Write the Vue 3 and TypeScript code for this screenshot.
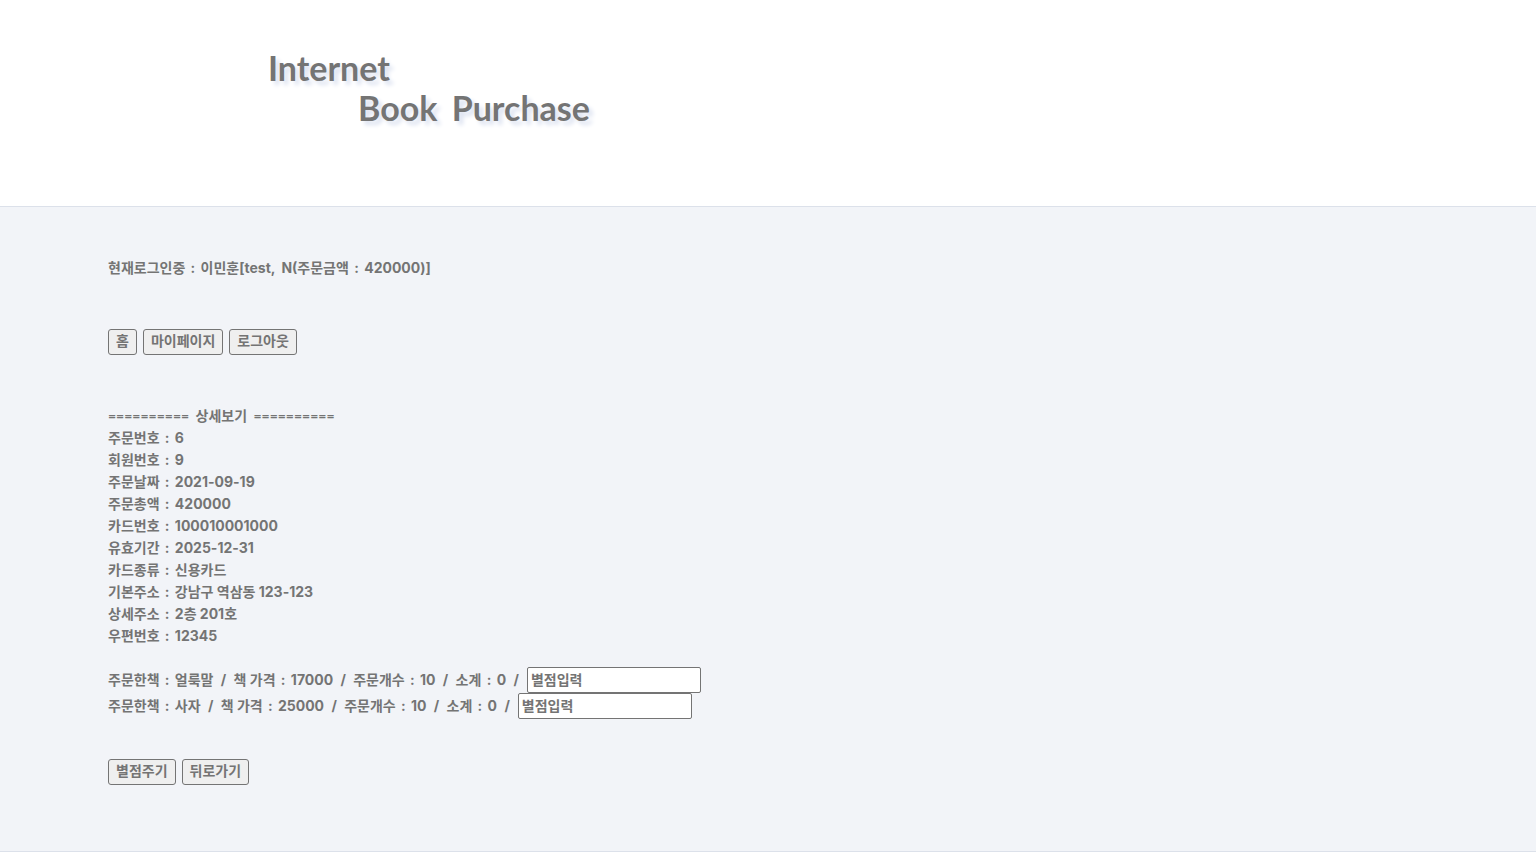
<script setup lang="ts">
import { ref } from 'vue'

interface OrderField {
  label: string
  value: string
}

interface OrderedBook {
  id: number
  title: string
  price: number
  count: number
  subtotal: number
}

const fields: OrderField[] = [
  { label: '주문번호', value: '6' },
  { label: '회원번호', value: '9' },
  { label: '주문날짜', value: '2021-09-19' },
  { label: '주문총액', value: '420000' },
  { label: '카드번호', value: '100010001000' },
  { label: '유효기간', value: '2025-12-31' },
  { label: '카드종류', value: '신용카드' },
  { label: '기본주소', value: '강남구 역삼동 123-123' },
  { label: '상세주소', value: '2층 201호' },
  { label: '우편번호', value: '12345' },
]

const books: OrderedBook[] = [
  { id: 1, title: '얼룩말', price: 17000, count: 10, subtotal: 0 },
  { id: 2, title: '사자', price: 25000, count: 10, subtotal: 0 },
]

const ratings = ref<string[]>(books.map(() => ''))
const rule = '='.repeat(10)
</script>

<template>
  <div class="page">
    <header class="header">
      <h1 class="title">
        <span class="line">Internet</span>
        <span class="line second">Book <span class="word">Purchase</span></span>
      </h1>
    </header>
    <main class="main">
      <p class="text">현재로그인중 <span class="colon">:</span> 이민훈[test, <span class="grade">N</span>(주문금액 <span class="colon">:</span> 420000)]</p>
      <nav class="buttons">
        <button type="button">홈</button>
        <button type="button">마이페이지</button>
        <button type="button">로그아웃</button>
      </nav>
      <section>
        <h2 class="text"><span class="rule">{{ rule }}</span> <span class="heading">상세보기</span> <span class="rule">{{ rule }}</span></h2>
        <p v-for="field in fields" :key="field.label" class="text">{{ field.label }} <span class="colon">:</span> {{ field.value }}</p>
      </section>
      <form class="books" @submit.prevent>
        <div v-for="(book, i) in books" :key="book.id" class="book">
          <label :for="`rating-${book.id}`">
            주문한책 <span class="colon">:</span> {{ book.title }} <span class="slash">/</span>
            책 가격 <span class="colon">:</span> {{ book.price }} <span class="slash">/</span>
            주문개수 <span class="colon">:</span> {{ book.count }} <span class="slash">/</span>
            소계 <span class="colon">:</span> {{ book.subtotal }} <span class="slash">/</span>
          </label>
          <input :id="`rating-${book.id}`" v-model="ratings[i]" type="text" placeholder="별점입력" />
        </div>
        <div class="buttons actions">
          <button type="submit">별점주기</button>
          <button type="button">뒤로가기</button>
        </div>
      </form>
    </main>
  </div>
</template>

<style>
body {
  margin: 0;
  background: #fff;
}
</style>

<style scoped>
.page {
  color: #747474;
  font: 700 14px/22px Inter, "Noto Sans CJK KR", sans-serif;
}

.header {
  padding: 48px 268px 78px;
  border-bottom: 1px solid #dce1ea;
}

.title {
  margin: 0;
  font: 700 34px/40px Lato, sans-serif;
  text-shadow: 4px 4px 4px #dce2f0;
}

.line {
  display: block;
}

.second {
  padding-left: 90px;
}

.word {
  margin-left: 6px;
}

.main {
  padding: 50px 108px 66px;
  background: #f2f4f8;
  border-bottom: 1px solid #dce1ea;
}

.text {
  margin: 0;
  font-size: 14px;
  line-height: 22px;
}

.rule {
  font-family: Lato, sans-serif;
}

.heading {
  margin: 0 3px;
}

.colon {
  margin: 0 2px;
}

.grade {
  margin-left: 3px;
}

.slash {
  margin: 0 4px;
}

.buttons {
  display: flex;
  gap: 6px;
  margin: 50px 0;
}

button {
  height: 26px;
  padding: 0 7px 2px;
  color: inherit;
  font: inherit;
  background: #efefef;
  border: 1px solid #747474;
  border-radius: 3px;
}

.books {
  margin-top: 20px;
}

.book {
  display: flex;
  align-items: center;
  gap: 4px;
}

.book input {
  box-sizing: border-box;
  width: 174px;
  height: 26px;
  padding: 0 3px 2px;
  color: inherit;
  font: inherit;
  background: #fff;
  border: 1px solid #747474;
  border-radius: 2px;
}

.book input::placeholder {
  color: #747474;
  opacity: 1;
}

.actions {
  margin: 40px 0 0;
}
</style>
